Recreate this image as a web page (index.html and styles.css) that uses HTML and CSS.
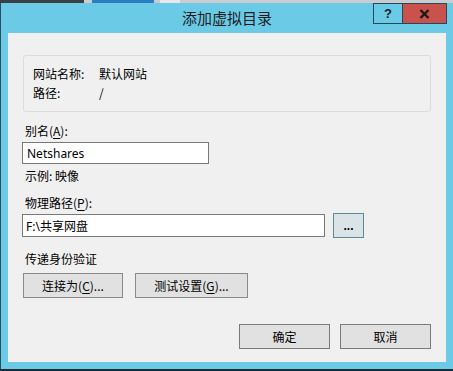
FILE: index.html
```html
<!DOCTYPE html>
<html lang="zh-CN">
<head>
<meta charset="utf-8">
<title>添加虚拟目录</title>
<link rel="stylesheet" href="styles.css">
</head>
<body>
<div class="topstrip"><span class="ts-a"></span><span class="ts-b"></span><span class="ts-c"></span></div>
<div class="window">
  <div class="titlebar">
    <div></div>
    <div class="title">添加虚拟目录</div>
    <div class="caption">
      <button class="cap help">?</button>
      <button class="cap close">
        <svg width="11" height="10" viewBox="0 0 11 10"><path d="M1.5 1 L9.5 9 M9.5 1 L1.5 9" stroke="#1b1b1b" stroke-width="2.4" fill="none"/></svg>
      </button>
    </div>
  </div>
  <div class="client">
    <div class="group">
      <div class="grow"><span class="glabel">网站名称:</span><span>默认网站</span></div>
      <div class="grow"><span class="glabel">路径:</span><span>/</span></div>
    </div>
    <div class="label l-alias">别名(<u>A</u>):</div>
    <div class="input short">Netshares</div>
    <div class="label l-example">示例: 映像</div>
    <div class="label l-path">物理路径(<u>P</u>):</div>
    <div class="pathrow">
      <div class="input long">F:\共享网盘</div>
      <button class="btn browse">...</button>
    </div>
    <div class="label l-auth">传递身份验证</div>
    <div class="authrow">
      <button class="btn connect">连接为(<u>C</u>)...</button>
      <button class="btn test">测试设置(<u>G</u>)...</button>
    </div>
    <div class="footer">
      <button class="btn ok">确定</button>
      <button class="btn ok">取消</button>
    </div>
  </div>
</div>
</body>
</html>
```
FILE: styles.css
```css
* { box-sizing: border-box; }
html, body { margin: 0; padding: 0; }
body {
  width: 453px;
  height: 371px;
  overflow: hidden;
  background: #1f2a33;
  font-family: "Noto Sans", "Noto Sans CJK SC", sans-serif;
  font-size: 12px;
  color: #000;
}
.topstrip {
  height: 3px;
  display: flex;
  background: #c9cdd0;
}
.ts-a { width: 84px; background: #3a3f44; }
.ts-b { width: 62px; background: #2a7fc4; margin-left: 8px; }
.ts-c { width: 20px; background: #e8e8e8; margin-left: 6px; }
.window {
  height: 366px;
  background: #6bcbe7;
  border-left: 1px solid #2c4f60;
  padding: 0 7px 0 7px;
  display: flex;
  flex-direction: column;
}
.titlebar {
  height: 30px;
  display: grid;
  grid-template-columns: 1fr auto 1fr;
  margin-right: -1px;
}
.title {
  font-family: "Noto Sans CJK SC", sans-serif;
  font-size: 15px;
  line-height: 30px;
  color: #1c1c1c;
  padding-right: 1px;
}
.caption {
  display: flex;
  justify-content: flex-end;
  align-items: flex-start;
}
.cap {
  height: 21px;
  border: 1px solid #26495a;
  margin: 0;
  padding: 0;
  font-family: "Liberation Sans", sans-serif;
  display: flex;
  align-items: center;
  justify-content: center;
}
.help {
  width: 29px;
  background: #6bcbe7;
  font-weight: bold;
  font-size: 13px;
  color: #1b1b1b;
  border-right: none;
}
.close {
  width: 45px;
  background: #c9524c;
}
.client {
  width: 438px;
  height: 329px;
  background: #f0f0f0;
  padding: 22px 15px 0 15px;
  display: flex;
  flex-direction: column;
  align-items: flex-start;
}
.group {
  width: 408px;
  height: 57px;
  border: 1px solid #dcdcdc;
  border-radius: 3px;
  padding: 8px 9px 0 9px;
  font-family: "Noto Sans CJK SC", sans-serif;
}
.grow {
  display: flex;
  line-height: 19px;
  height: 19px;
}
.glabel { width: 66px; }
.label {
  line-height: 16px;
  height: 16px;
  font-family: "Noto Sans CJK SC", sans-serif;
  margin-left: 2px;
}
.label u { text-underline-offset: 2px; }
.l-alias { margin-top: 11px; }
.l-example { margin-top: 4px; margin-left: 2px; }
.l-path { margin-top: 11px; }
.l-auth { margin-top: 13px; }
.input {
  background: #fff;
  border: 1px solid #7a7a7a;
  padding: 0 0 0 4px;
  display: flex;
  align-items: center;
  font-family: "Noto Sans", "Noto Sans CJK SC", sans-serif;
  font-size: 12px;
  margin-left: -1px;
}
.short { width: 187px; height: 22px; margin-top: 3px; }
.long { width: 303px; height: 23px; padding-left: 3px; }
.pathrow {
  display: flex;
  align-items: center;
  margin-top: 2px;
  margin-left: -1px;
  height: 25px;
}
.pathrow .long { margin-left: 0; }
.btn {
  margin: 0;
  padding: 0;
  height: 25px;
  background: #e1e1e1;
  border: 1px solid #adadad;
  font-family: "Noto Sans CJK SC", sans-serif;
  font-size: 12px;
  color: #000;
  display: flex;
  align-items: center;
  justify-content: center;
}
.btn u { text-underline-offset: 2px; }
.browse {
  width: 31px;
  margin-left: 8px;
  background: #dae3e6;
  border: 1px solid #5f8a8f;
  font-weight: bold;
  font-family: "Liberation Sans", sans-serif;
  padding-top: 1px;
}
.authrow {
  display: flex;
  gap: 12px;
  margin-top: 6px;
}
.connect { width: 100px; border-color: #8a8a8a; }
.test { width: 113px; border-color: #8a8a8a; }
.footer {
  display: flex;
  gap: 10px;
  margin-top: 26px;
  align-self: flex-end;
}
.ok { width: 91px; border-color: #7a7a7a; }
```
